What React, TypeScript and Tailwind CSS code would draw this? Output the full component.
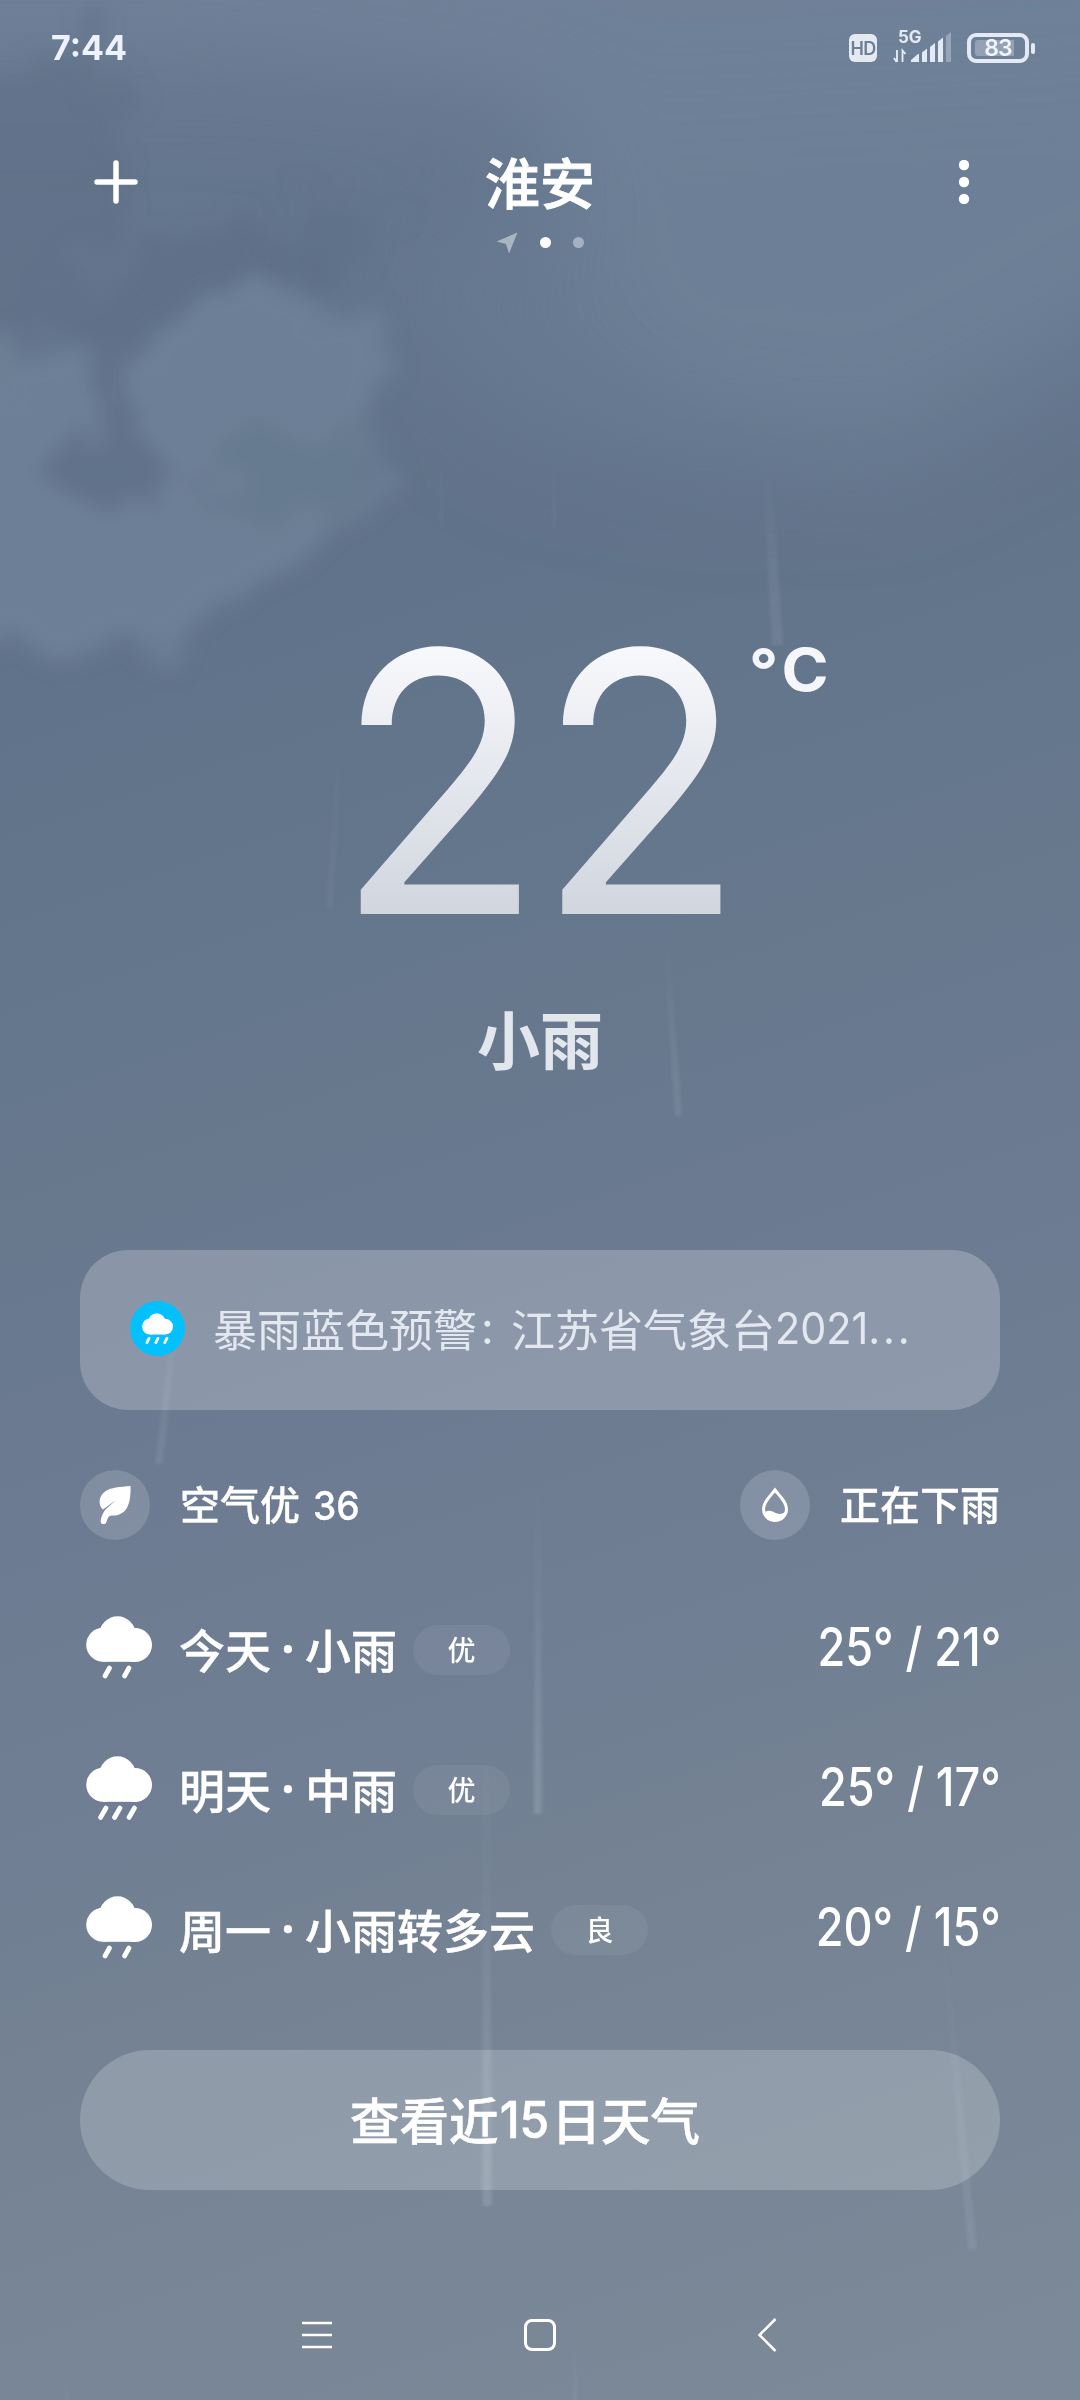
type Day = { day: string; weather: string; aqi: string; drops: number; temps: string };

const days: Day[] = [
  { day: "今天", weather: "小雨", aqi: "优", drops: 2, temps: "25° / 21°" },
  { day: "明天", weather: "中雨", aqi: "优", drops: 3, temps: "25° / 17°" },
  { day: "周一", weather: "小雨转多云", aqi: "良", drops: 2, temps: "20° / 15°" },
];

function Sky() {
  return (
    <svg className="absolute inset-0 h-full w-full" viewBox="0 0 1080 2400" aria-hidden="true">
      <defs>
        <linearGradient id="sky" gradientUnits="userSpaceOnUse" x1="240" y1="100" x2="1000" y2="2350">
          <stop offset="0" stopColor="#65778e" />
          <stop offset="0.2" stopColor="#61738a" />
          <stop offset="0.36" stopColor="#65778c" />
          <stop offset="0.5" stopColor="#6b7a90" />
          <stop offset="0.66" stopColor="#707e94" />
          <stop offset="0.76" stopColor="#748293" />
          <stop offset="1" stopColor="#7b8999" />
        </linearGradient>
        <filter id="cloud" filterUnits="userSpaceOnUse" x="-150" y="-150" width="900" height="1000">
          <feTurbulence type="fractalNoise" baseFrequency="0.014" numOctaves="5" seed="7" result="n" />
          <feDisplacementMap in="SourceGraphic" in2="n" scale="130" xChannelSelector="R" yChannelSelector="G" />
          <feGaussianBlur stdDeviation="10" />
        </filter>
        <filter id="haze" filterUnits="userSpaceOnUse" x="-300" y="-400" width="1700" height="1300">
          <feGaussianBlur stdDeviation="55" />
        </filter>
        <filter id="soft" filterUnits="userSpaceOnUse" x="0" y="0" width="1080" height="2400">
          <feGaussianBlur stdDeviation="1.6" />
        </filter>
        <linearGradient id="fade" x1="0" y1="0" x2="0" y2="1">
          <stop offset="0" stopColor="#c3d0dc" stopOpacity="0" />
          <stop offset="0.7" stopColor="#c3d0dc" stopOpacity="0.1" />
          <stop offset="1" stopColor="#c3d0dc" stopOpacity="0.12" />
        </linearGradient>
      </defs>
      <rect width="1080" height="2400" fill="url(#sky)" />
      <g filter="url(#haze)">
        <path d="M-200 -300H1300V60L560 100L240 60L-200 60Z" fill="#6f8198" />
        <path d="M560 -100H1300V220L1040 380L860 470L660 400L540 230Z" fill="#6f8198" opacity="0.85" />
        <path d="M360 240L560 240L760 480L520 430Z" fill="#6a7c93" opacity="0.7" />
      </g>
      <g filter="url(#cloud)">
        <path d="M20 60L100 30L130 190L100 240L0 380L-80 380L-80 180Z" fill="#5b6d86" opacity="0.5" />
        <path d="M60 290Q180 230 330 220L330 250Q220 300 120 350Z" fill="#5b6d86" opacity="0.6" />
        <path d="M280 230L390 200L380 260L300 290Z" fill="#5d6f87" opacity="0.5" />
        <path d="M130 370Q150 300 250 290Q370 280 380 350Q380 440 350 470Q430 500 410 520Q330 520 290 570Q220 620 120 650Q40 690 20 650L-80 620V340L90 340Z" fill="#6f8198" opacity="0.85" />
        <path d="M110 340L140 370L130 440L190 480L170 520L120 480L50 500L80 420Z" fill="#5f7189" opacity="0.85" />
        <path d="M190 490L300 420L400 440L370 510L260 530Z" fill="#65778f" opacity="0.7" />
      </g>
      <g fill="url(#fade)" filter="url(#soft)">
        <path d="M762 470H772L783 645H772Z" />
        <path d="M553 450H555L556 527H552Z" opacity="0.5" />
        <path d="M440 450H442L444 527H440Z" opacity="0.4" />
        <path d="M338 740H342L333 908H326Z" opacity="0.5" />
        <path d="M663 940H669L682 1116H675Z" />
        <path d="M176 1290H181L163 1464H155Z" />
        <path d="M535 1470H541L543 1814H533Z" />
        <path d="M536.5 1560H539L540 1814H535Z" />
        <path d="M482 1740H490L493 2206H481Z" />
        <path d="M484 1900H489L490 2206H484Z" />
        <path d="M940 1930H946L977 2250H968Z" />
        <path d="M573 2340H576L577 2420H573Z" />
        <path d="M64 2370H67L72 2440H66Z" />
      </g>
    </svg>
  );
}

function StatusBar() {
  return (
    <div className="flex h-24 items-center justify-between pl-[51px] pr-[45px]">
      <div className="text-[34px] leading-[34px] font-bold text-[#eef2fc] font-['Inter',sans-serif]">7:44</div>
      <div className="flex items-center text-[#e4eaf5]">
        <div className="flex h-7 w-7 items-center justify-center rounded-[6px] bg-[#e4e9f2] text-[18px] font-semibold tracking-[-0.6px] text-[#6e7f96] font-['Inter',sans-serif]">HD</div>
        <div className="ml-4 flex h-[40px] w-[60px] flex-col">
          <div className="ml-[5px] h-[16px] text-[17px] leading-[18px] font-bold font-['Inter',sans-serif]">5G</div>
          <svg className="mt-[-14px] h-[34px] w-[60px] shrink-0" viewBox="0 0 60 34" fill="currentColor">
            <path d="M4 20v12M3.700 32L1 28M9.500 32V20.500l3 3.500" stroke="currentColor" strokeWidth="1.900" fill="none" />
            <path d="M18 32v-2l7-6h1v8zM29 32v-9.500l5-4V32zM37 32V17l5-4V32zM45 32V11.500l5-4V32z" />
            <path d="M53 32V6l5-4V32z" opacity="0.35" />
          </svg>
        </div>
        <div className="ml-[14px] flex h-[30px] w-[62px] items-center justify-center rounded-[9px] border-4 border-[#e4eaf5]">
          <div className="flex h-4 w-[46px] items-center justify-center rounded-[3px] bg-linear-to-r from-[#95a2b5] from-84% to-transparent to-84%">
            <span className="text-[23px] leading-none font-semibold tracking-[-1px] text-[#f0f4fb] font-['Inter',sans-serif]">83</span>
          </div>
        </div>
        <div className="ml-[2px] h-[11px] w-[4px] rounded-full bg-[#e4eaf5]" />
      </div>
    </div>
  );
}

function CloudShape() {
  return (
    <>
      <circle cx="17.200" cy="28.700" r="17" />
      <circle cx="31.500" cy="18.500" r="18.200" />
      <circle cx="49" cy="29" r="17" />
      <rect x="17" y="20" width="32" height="25.800" />
    </>
  );
}

function RainCloud({ drops }: { drops: number }) {
  return (
    <svg className="h-[66px] w-[66px]" viewBox="0 0 66 66" fill="currentColor">
      <CloudShape />
      <path
        d={drops === 3 ? "M20 52L14.500 61.500M34 52L28.500 61.500M48.500 52L43 61.500" : "M23.500 52L19 60M43 52L38.500 60"}
        stroke="currentColor"
        strokeWidth="4.800"
        strokeLinecap="round"
      />
    </svg>
  );
}

function DayRow({ day, weather, aqi, drops, temps }: Day) {
  return (
    <div className="flex h-[140px] items-center">
      <div className="ml-[6px] mt-[-3px]">
        <RainCloud drops={drops} />
      </div>
      <div className="ml-[27px] mt-[-5px] flex items-center text-[46px] leading-[60px] font-medium [-webkit-text-stroke:0.4px]">
        <span>{day}</span>
        <span className="w-[34px] text-center font-bold font-['Inter',sans-serif]">·</span>
        <span>{weather}</span>
      </div>
      <div className="ml-[16px] flex h-[50px] w-[97px] items-center justify-center rounded-full bg-white/6 pb-[2px] text-[28px] leading-none font-medium">
        {aqi}
      </div>
      <div className="ml-auto mt-[-7px] mr-[-1px] flex w-[182px] justify-end">
        <span className="origin-right scale-x-[0.85] text-[53px] leading-[60px] font-[450] whitespace-nowrap font-['Inter',sans-serif]">{temps}</span>
      </div>
    </div>
  );
}

export default function App() {
  return (
    <div className="relative h-[2400px] w-[1080px] overflow-hidden bg-[#687a90] text-white font-['Noto_Sans_CJK_SC',sans-serif]">
      <Sky />
      <div className="relative flex flex-col">
        <StatusBar />

        <header className="mt-10 flex h-[92px] items-center justify-between pl-[94px] pr-[94px]">
          <svg className="h-11 w-11" viewBox="0 0 44 44" stroke="currentColor" strokeWidth="5.500" strokeLinecap="round">
            <path d="M22 3v38M3 22h38" />
          </svg>
          <h1 className="mt-[-4px] text-[55px] leading-[60px] font-medium [-webkit-text-stroke:0.8px]">淮安</h1>
          <svg className="h-11 w-11" viewBox="0 0 44 44" fill="currentColor">
            <circle cx="22" cy="5" r="5.200" />
            <circle cx="22" cy="22" r="5.200" />
            <circle cx="22" cy="39" r="5.200" />
          </svg>
        </header>
        <div className="flex h-[29px] items-center pl-[496px]">
          <svg className="h-[22px] w-[22px]" viewBox="0 0 21 22" preserveAspectRatio="none" fill="#a9b5c3">
            <path d="M20.500 0.500L12.500 21.500L9.500 12L0.500 9.500Z" />
          </svg>
          <div className="ml-[22px] h-[11px] w-[11px] rounded-full bg-white" />
          <div className="ml-[22px] h-[11px] w-[11px] rounded-full bg-[#a5b1c3]" />
        </div>

        <section className="mt-[380px] grid h-[287px] grid-cols-[1fr_357px_1fr]">
          <div className="col-start-2 flex justify-center">
            <div className="shrink-0 scale-x-[0.94] bg-linear-to-b from-[#f9fafd] to-[#cfd4dd] bg-clip-text pr-[8px] text-[363px] leading-[290px] font-[390] tracking-[-7px] text-transparent font-['Inter',sans-serif]">
              22
            </div>
          </div>
          <div className="pl-[30px] pt-[3px]">
            <div className="origin-left scale-x-[1.08] text-[59px] leading-[60px] font-bold tracking-[4px] text-[#f4f6fa] font-['Inter',sans-serif]">°C</div>
          </div>
        </section>
        <div className="mt-[73px] mb-[4px] text-center text-[63px] leading-[80px] font-bold text-[#e2e6ed]">小雨</div>

        <main className="flex flex-col px-20">
          <div className="mt-[169px] flex h-40 items-center rounded-[48px] bg-white/22 pl-[50px]">
            <div className="mt-[-3px] flex h-[55px] w-[55px] items-center justify-center rounded-full bg-[#04c0fd]">
              <svg className="h-[31px] w-[31px]" viewBox="0 0 66 66" fill="currentColor">
                <CloudShape />
                <path d="M15 54L10.500 63M34 54L29.500 63M53 54L48.500 63" stroke="currentColor" strokeWidth="6" strokeLinecap="round" />
              </svg>
            </div>
            <p className="ml-[28px] mt-[-5px] flex text-[44px] leading-[60px] whitespace-nowrap text-[#e3e8f0]">
              <span>暴雨蓝色预警</span>
              <span className="w-[34px] pl-[4px] font-['Inter',sans-serif]">:</span>
              <span>江苏省气象台</span>
              <span className="origin-left scale-x-[0.94] font-['Inter',sans-serif]">
                2021<span className="tracking-[3px]">...</span>
              </span>
            </p>
          </div>

          <div className="mt-[60px] flex h-[70px] items-center text-[40px] leading-[60px] font-medium">
            <div className="flex h-[70px] w-[70px] items-center justify-center rounded-full bg-white/15">
              <svg className="h-[38px] w-[32px]" viewBox="0 0 32 38" fill="currentColor">
                <path d="M31.500 0C32 16 29 29 14 29.500C10 29.500 9 31 7.500 35.500A2.900 2.900 0 0 1 1.700 35C2 31 4 27 6 24L17 14L4 23.500C-1 19 -0.500 10.500 5.500 6C12 1 21 1 31.500 0Z" />
              </svg>
            </div>
            <div className="ml-[30px] mt-[-1px] [-webkit-text-stroke:0.3px]">
              空气优 <span className="ml-[4px] inline-block origin-left scale-x-[0.93] text-[40px] font-['Inter',sans-serif]">36</span>
            </div>
            <div className="ml-auto flex h-[70px] w-[70px] items-center justify-center rounded-full bg-white/15">
              <svg className="h-[36px] w-[28px]" viewBox="0 0 28 36" fill="none" stroke="currentColor" strokeWidth="3">
                <path d="M14 3C9 9.500 2.500 15 2.500 22A11.500 11.500 0 0 0 25.500 22C25.500 15 19 9.500 14 3Z" />
                <path d="M3 26C8 21.500 12 25 16 26.500C19.500 27.500 22 26.500 25 24.500C23.500 31 19 33.500 14 33.500C9 33.500 5 31 3 26Z" fill="currentColor" stroke="none" />
              </svg>
            </div>
            <div className="ml-[30px] mt-[-4px] [-webkit-text-stroke:0.3px]">正在下雨</div>
          </div>

          <div className="mt-10">
            {days.map((d) => (
              <DayRow key={d.day} {...d} />
            ))}
          </div>

          <button className="mt-[50px] flex h-[140px] items-center rounded-full bg-white/20 pb-[2px] pl-[270px] text-[49.500px] leading-[60px] font-medium [-webkit-text-stroke:0.6px]">
            <span>查看近</span>
            <span className="flex w-[53px] justify-center">
              <span className="mt-[2px] shrink-0 scale-x-[0.94] pr-[2px] text-[51px] font-['Inter',sans-serif]">15</span>
            </span>
            <span>日天气</span>
          </button>
        </main>

        <nav className="mt-20 flex h-[130px] items-center pl-[301px]">
          <svg className="h-8 w-8" viewBox="0 0 32 32" stroke="currentColor" strokeWidth="2.600">
            <path d="M1 4h30M1 16h30M1 28h30" />
          </svg>
          <div className="ml-[191px] h-8 w-8 rounded-[8px] border-[3px] border-white" />
          <svg className="ml-[201px] h-[34px] w-5" viewBox="0 0 20 34" fill="none" stroke="currentColor" strokeWidth="2.600">
            <path d="M18.500 1L2.500 17L18.500 33" />
          </svg>
        </nav>
      </div>
    </div>
  );
}
